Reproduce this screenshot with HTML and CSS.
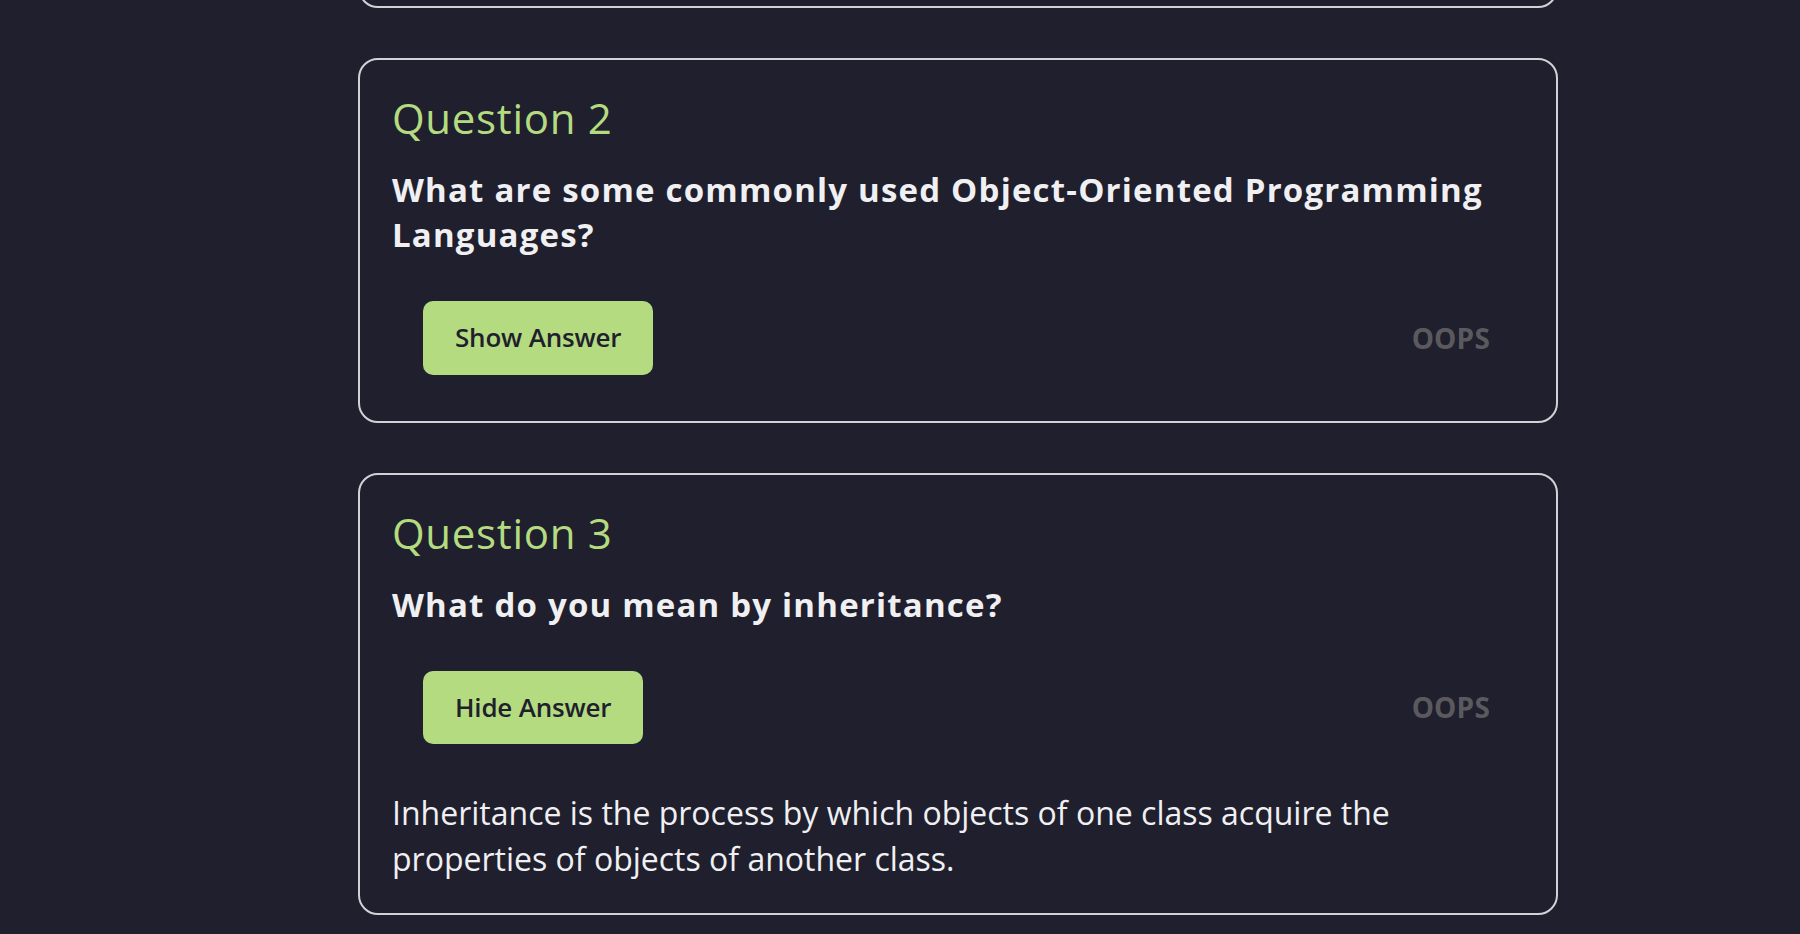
FILE: index.html
```html
<!DOCTYPE html>
<html lang="en">
<head>
<meta charset="utf-8">
<title>OOPS Questions</title>
<link rel="stylesheet" href="styles.css">
</head>
<body>
<main class="list">
  <div class="card card-partial"></div>
  <section class="card">
    <h2 class="q-title">Question 2</h2>
    <p class="q-text">What are some commonly used Object-Oriented Programming Languages?</p>
    <div class="q-actions">
      <button class="btn">Show Answer</button>
      <span class="tag">OOPS</span>
    </div>
  </section>
  <section class="card">
    <h2 class="q-title">Question 3</h2>
    <p class="q-text">What do you mean by inheritance?</p>
    <div class="q-actions">
      <button class="btn">Hide Answer</button>
      <span class="tag">OOPS</span>
    </div>
    <p class="answer">Inheritance is the process by which objects of one class acquire the properties of objects of another class.</p>
  </section>
</main>
</body>
</html>
```
FILE: styles.css
```css
html, body {
  margin: 0;
  padding: 0;
  background: #1f1f2e;
  height: 100%;
  overflow: hidden;
}
body {
  font-family: "Open Sans", "Lato", sans-serif;
  color: #f0f0f2;
}
.list {
  width: 1200px;
  margin: -51px 0 0 358px;
  display: flex;
  flex-direction: column;
  gap: 50px;
}
.card {
  box-sizing: border-box;
  border: 2px solid #d2d2d6;
  border-radius: 20px;
  padding: 32px 32px 32px;
}
.card-partial {
  height: 59px;
  padding: 0;
}
.q-title {
  margin: 2px 0 0;
  font-size: 42px;
  line-height: 48px;
  font-weight: 500;
  letter-spacing: 0.7px;
  color: #b4db80;
}
.q-text {
  margin: 25px 0 0;
  font-size: 33px;
  line-height: 45px;
  font-weight: 700;
  letter-spacing: 1.2px;
  color: #f0f0f2;
}
.q-actions {
  display: flex;
  justify-content: space-between;
  align-items: center;
  padding: 0 34px 0 31px;
  margin: 44px 0 14px;
}
.btn {
  font-family: inherit;
  font-size: 26px;
  line-height: 33.5px;
  font-weight: 600;
  letter-spacing: -0.2px;
  color: #1f1f2e;
  background: #b4db80;
  border: none;
  border-radius: 10px;
  padding: 20px 32px;
}
.tag {
  font-size: 28px;
  font-weight: 700;
  letter-spacing: 0.2px;
  color: #5a5a5e;
}
.answer {
  margin: 46px 0 0;
  font-size: 32px;
  line-height: 45.5px;
  font-weight: 400;
  color: #f0f0f2;
}
```
